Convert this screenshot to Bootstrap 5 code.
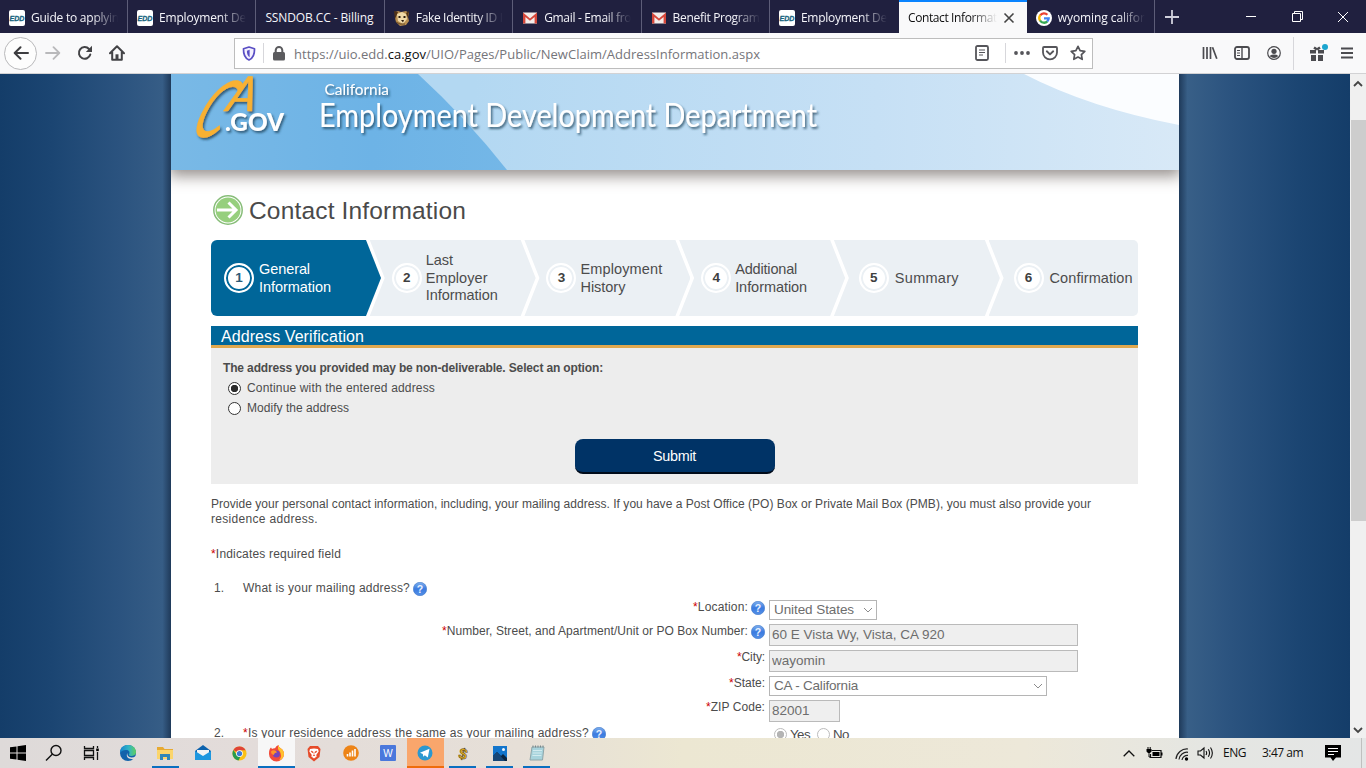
<!DOCTYPE html>
<html lang="en">
<head>
  <meta charset="UTF-8">
  <meta name="viewport" content="width=device-width, initial-scale=1">
  <title>Contact Information</title>
  <link href="https://cdn.jsdelivr.net/npm/bootstrap@5.3.0/dist/css/bootstrap.min.css" rel="stylesheet">
  <style>
    body { width: 1366px; height: 768px; font: 12px/15px "Liberation Sans", Arial, sans-serif; color: #4c4c4c; }
    svg { display: block; flex: none; }
    [data-w] { white-space: nowrap; }

    /* browser tabs */
    .tabstrip { height: 33px; background: #20203f; font: 12px/16px "Open Sans", "Noto Sans", sans-serif; color: #f5f5fa; }
    .btab { width: 128.4px; padding: 2px 9px 0 9px; border-right: 1px solid #5d5d78; gap: 6px; }
    .btab.first { width: 128px; }
    .btab.current { background: #f9f9fa; color: #0c0c0d; border-top: 2px solid #0a84ff; padding-top: 0; border-right: 0; width: 127.8px; }
    .btab.before { border-right-color: transparent; width: 129px; }
    .tabtext { overflow: hidden; -webkit-mask-image: linear-gradient(90deg, #000 70%, transparent 100%); mask-image: linear-gradient(90deg, #000 70%, transparent 100%); }
    .tabtext.whole { -webkit-mask-image: none; mask-image: none; overflow: visible; }
    .newtab { width: 34px; }
    .winbtn { width: 46px; }

    /* toolbar */
    .toolbar { height: 41px; background: #f9f9fa; border-bottom: 1px solid #d2d2d4; font: 13px/18px "Open Sans", "Noto Sans", sans-serif; color: #75757a; }
    .tool { width: 32px; height: 40px; }
    .backbtn { width: 33px; height: 33px; border: 1px solid #b9b9bb; border-radius: 50%; background: #fdfdfd; margin-left: 4px; }
    .urlbar { width: 859px; height: 31px; border: 1px solid #bdbdbd; background: #fff; margin-left: 101px; }
    .urltext { padding-top: 2px; }
    .vline { width: 1px; background: #d7d7db; }
    .vline.inbar { height: 20px; }
    .host { color: #0c0c0d; }

    /* page */
    .viewport { height: 664px; overflow: hidden; }
    .side { width: 171px; background: linear-gradient(90deg, #143d69, #1b4572 30%, #2b537f 70%, #365d86 95%, #1f3a5a); }
    .side.right { background: linear-gradient(270deg, #143d69, #1b4572 30%, #2b537f 70%, #385f87 95%, #1f3a5a); }
    .sheet { width: 1008px; background: #fff; }
    .banner { height: 96px; box-shadow: 0 4px 14px 2px rgba(80, 70, 65, .6); clip-path: inset(0 0 -24px 0); }
    .inner { padding: 24px 41px 0 40px; }
    .pagetitle { font-size: 24.5px; line-height: 31px; height: 32px; color: #4a4a4a; margin: 0 0 14px 2px; gap: 6px; }
    .pagetitle span { padding-top: 1px; }
    .scroller { width: 16px; background: #f0f0f0; padding-left: 1px; }
    .uparrow { margin-top: 3px; }
    .thumb { height: 401px; background: #cdcdcd; margin-top: 29px; }

    /* progress steps */
    .steps { height: 76px; margin-bottom: 10px; }
    .wstep { width: 166px; margin-left: -11.2px; padding-left: 22px; background: #ebf0f4; font-size: 14.5px; line-height: 17.4px; gap: 4px;
      clip-path: polygon(0 0, 151px 0, 166px 50%, 151px 100%, 0 100%, 15px 50%); }
    .wstep > :last-child { padding-top: 1px; }
    .wstep.on { width: 170px; margin-left: 0; padding-left: 13px; gap: 5px; background: #069; color: #fff; border-radius: 6px 0 0 6px;
      clip-path: polygon(0 0, 155px 0, 170px 50%, 155px 100%, 0 100%); }
    .wstep.last { width: 149.5px; border-radius: 0 5px 5px 0; clip-path: polygon(0 0, 100% 0, 100% 100%, 0 100%, 15px 50%); }
    .wstep.single { padding-left: 25px; gap: 6px; }
    .num { width: 30px; height: 30px; border-radius: 50%; border: 2px solid #fff; background: #fff; box-shadow: inset 0 0 0 2px #ebf0f4; font-weight: bold; font-size: 13.5px; color: #3f3f3f; flex: none; }
    .on .num { box-shadow: inset 0 0 0 2px #069; color: #2c5a76; }

    .barhead { height: 22px; background: #069; border-bottom: 3px solid #e0a84e; color: #fff; font-size: 16px; line-height: 21px; padding-left: 10px; }
    .verify { height: 136px; background: #ededed; padding: 13px 12px 0; }
    .optrow { height: 20.5px; padding-left: 5px; gap: 6px; }
    .optrow.top-opt { margin-top: 2px; }
    .optdot { appearance: none; width: 13px; height: 13px; margin: 0; border: 1px solid #333; border-radius: 50%; background: #fff; }
    .optdot:checked { background: radial-gradient(circle, #2b2b2b 0 3.4px, #fff 4px); }
    .optdot:disabled { border-color: #bcbcbc; }
    .optdot:disabled:checked { background: radial-gradient(circle, #b4b4b4 0 3.4px, #fff 4px); }
    .btn-send { width: 200px; height: 35px; margin: 20px auto 0; background: #036; color: #fff; border-radius: 8px; border: 0; border-bottom: 2px solid #000b1a; font-size: 14.4px; line-height: 32px; padding: 0; display: block; }
    .btn-send:hover { background: #036; color: #fff; }

    /* claim form */
    .intro { margin-top: 13px; }
    .legend-req { margin-top: 20px; }
    .req { color: #c00; }
    .question { margin-top: 19px; }
    .question svg, .question2 svg { margin-left: 3px; }
    .question2 { width: 563px; padding-top: 2px; }
    .qnum { width: 32px; padding-left: 3px; }
    .formrow { gap: 4px; height: 26px; }
    .formrow.tight { height: 24px; }
    .formrow.first-row { margin-top: 4px; }
    .lab { width: 554px; gap: 3px; height: 15px; }
    .field { appearance: none; border: 1px solid #bababa; background: #efefef; color: #6d6d6d; font-size: 13.5px; line-height: 18px; height: 22px; padding: 0 2px 2px; border-radius: 0; }
    .field.wide { width: 309px; }
    .field.zip { width: 71px; }
    .pick { height: 20px; background: #fff; border: 1px solid #b5b5b5; color: #6d6d6d; font-size: 13.5px; line-height: 18px; padding: 0 3px 0 4px; }
    .pick.country { width: 108px; }
    .pick.state { width: 278px; }
    .yesno { gap: 3px; margin-top: 3px; font-size: 13.3px; }

    /* taskbar */
    .taskbar { height: 30px; background: linear-gradient(90deg, #dedad9, #e3dcda 18%, #e6dfd7 38%, #ece7d2 50%, #ede8d9 75%, #e5e6e2 88%, #e4e6e6); font: 12px/16px "Open Sans", "Noto Sans", sans-serif; color: #111; }
    .app { width: 37.15px; height: 30px; border-bottom: 2px solid transparent; padding-top: 2px; }
    .app.start { width: 35.4px; }
    .app.open { background: linear-gradient(#0a6fc0, #0a6fc0) center bottom / 27px 2px no-repeat border-box; }
    .app.front { background: #f7f7f7; border-bottom-color: #0a6fc0; }
    .app.alert-app { background: #f9a66c; border-bottom-color: #ef6c0c; }
  </style>
</head>
<body class="d-flex flex-column overflow-hidden m-0">

  <!-- shared icons -->
  <svg width="0" height="0" class="position-absolute">
    <defs>
      <linearGradient id="helpFill" x1="0" y1="0" x2="0" y2="1"><stop offset="0" stop-color="#7fb0ee"/><stop offset=".5" stop-color="#3b7be0"/><stop offset="1" stop-color="#5590e6"/></linearGradient>
      <symbol id="edd" viewBox="0 0 16 16"><rect width="16" height="16" rx="2" fill="#fff"/><text x=".4" y="10.600" font-family="Liberation Sans" font-size="8" font-weight="bold" font-style="italic" fill="#17647e" stroke="#17647e" stroke-width=".3" textLength="15" lengthAdjust="spacingAndGlyphs">EDD</text></symbol>
      <symbol id="gmail" viewBox="0 0 16 16"><path d="M1 2.500h14v11H1z" fill="#f3ece9"/><path d="M1 13.500v-11l7 6 7-6v11h-2.400V7L8 10.700 3.400 7v6.500z" fill="#d5473a"/></symbol>
      <symbol id="help" viewBox="0 0 14 14"><circle cx="7" cy="7" r="6.700" fill="url(#helpFill)" stroke="#4077c8" stroke-width=".6"/><text x="7" y="10.800" text-anchor="middle" font-family="Liberation Sans" font-size="10.500" font-weight="bold" fill="#e8f1ff">?</text></symbol>
      <symbol id="down" viewBox="0 0 10 6"><path d="M1 1l4 4 4-4" fill="none" stroke="#8c8c8c"/></symbol>
    </defs>
  </svg>

  <div class="tabstrip d-flex">
    <div class="btab first d-flex align-items-center"><svg width="16" height="16"><use href="#edd"/></svg><div class="tabtext"><span data-w="88">Guide to applyin</span></div></div>
    <div class="btab d-flex align-items-center"><svg width="16" height="16"><use href="#edd"/></svg><div class="tabtext"><span data-w="87">Employment De</span></div></div>
    <div class="btab d-flex align-items-center"><div class="tabtext whole"><span data-w="108">SSNDOB.CC - Billing</span></div></div>
    <div class="btab d-flex align-items-center">
      <svg width="16" height="16" viewBox="0 0 16 16"><path d="M1 2l3-1 3 1 5-1 3 2-1 4 1 4-3 4-6 1-4-4-1-4z" fill="#b98f50"/><path d="M3 4l5-2 4 2 1 5-4 5-5-3z" fill="#efd9a8"/><path d="M0 1l4 1-3 7zM15 1l-3 2 2 5z" fill="#4f3218"/><path d="M4.500 6h2v2h-2zm5 0h2v2h-2zM7 10h3l-1 2.500z" fill="#2c1c0c"/><path d="M2 12l4 2 5 0" stroke="#6b4a23" fill="none"/></svg>
      <div class="tabtext"><span data-w="87">Fake Identity ID I</span></div></div>
    <div class="btab d-flex align-items-center"><svg width="16" height="16"><use href="#gmail"/></svg><div class="tabtext"><span data-w="87">Gmail - Email fro</span></div></div>
    <div class="btab d-flex align-items-center"><svg width="16" height="16"><use href="#gmail"/></svg><div class="tabtext"><span data-w="87">Benefit Program</span></div></div>
    <div class="btab before d-flex align-items-center"><svg width="16" height="16"><use href="#edd"/></svg><div class="tabtext"><span data-w="86">Employment De</span></div></div>
    <div class="btab current d-flex align-items-center">
      <div class="tabtext"><span data-w="89">Contact Informat</span></div>
      <svg width="12" height="12" viewBox="0 0 12 12"><path d="M1.500 1.500l9 9m0-9l-9 9" stroke="#444" stroke-width="1.600"/></svg></div>
    <div class="btab d-flex align-items-center">
      <svg width="16" height="16" viewBox="0 0 16 16"><circle cx="8" cy="8" r="8" fill="#fff"/><g fill="none" stroke-width="2.300"><path d="M4.200 5.400A4.700 4.700 0 0 1 11.400 4.800" stroke="#ea4335"/><path d="M4.200 5.200a4.800 4.800 0 0 0 0 5.600" stroke="#fbbc05"/><path d="M4.100 10.500a4.700 4.700 0 0 0 7.300.9" stroke="#34a853"/><path d="M8 8.300h4.700a4.700 4.700 0 0 1-1.400 3.200" stroke="#4285f4"/></g></svg>
      <div class="tabtext"><span data-w="87">wyoming califor</span></div></div>
    <div class="newtab d-flex align-items-center justify-content-center"><svg width="14" height="14" viewBox="0 0 14 14"><path d="M7 0v14M0 7h14" stroke="#d0d0dc" stroke-width="1.800"/></svg></div>
    <div class="d-flex align-items-center ms-auto">
      <div class="winbtn d-flex justify-content-center"><svg width="10" height="10"><path d="M0 4.500h10" stroke="#fff"/></svg></div>
      <div class="winbtn d-flex justify-content-center"><svg width="11" height="11"><path d="M.5 2.500h8v8h-8zM2.500 2.500v-2h8v8h-2" fill="none" stroke="#fff"/></svg></div>
      <div class="winbtn d-flex justify-content-center"><svg width="10" height="10"><path d="M0 0l10 10M10 0L0 10" stroke="#fff"/></svg></div>
    </div>
  </div>

  <div class="toolbar d-flex align-items-center">
    <div class="backbtn d-flex align-items-center justify-content-center"><svg width="16" height="14" viewBox="0 0 16 14"><path d="M15 7H2M7.500 1.200L1.700 7l5.800 5.800" fill="none" stroke="#3d3d40" stroke-width="2" stroke-linecap="round" stroke-linejoin="round"/></svg></div>
    <div class="tool d-flex align-items-center justify-content-center"><svg width="16" height="14" viewBox="0 0 16 14"><path d="M1 7h13M8.500 1.200L14.300 7l-5.800 5.800" fill="none" stroke="#b9b9bb" stroke-width="1.800" stroke-linecap="round" stroke-linejoin="round"/></svg></div>
    <div class="tool d-flex align-items-center justify-content-center"><svg width="16" height="16" viewBox="0 0 16 16"><path d="M13.300 9.500A5.800 5.800 0 1 1 12 4" fill="none" stroke="#434346" stroke-width="2" stroke-linecap="round"/><path d="M15 .8V7H8.800z" fill="#434346"/></svg></div>
    <div class="tool d-flex align-items-center justify-content-center"><svg width="16" height="16" viewBox="0 0 16 16"><path d="M1 8.200L8 1.300l7 6.900M3.200 7v7.700h9.600V7" fill="none" stroke="#434346" stroke-width="2" stroke-linecap="round" stroke-linejoin="round"/><path d="M6.500 14.500V9.300h3v5.200" fill="#434346"/></svg></div>

    <div class="urlbar d-flex align-items-center">
      <div class="d-flex justify-content-center" style="width:28px"><svg width="14" height="15" viewBox="0 0 14 15"><path d="M7 1l5.500 1.700C12.700 8 11.500 12 7 14 2.500 12 1.300 8 1.500 2.700z" fill="#f4f0ff" stroke="#5a4fc4" stroke-width="1.700" stroke-linejoin="round"/><path d="M7.600 3.800v7.400C5.400 9.800 4.900 7.500 4.900 4.700z" fill="#5a4fc4"/></svg></div>
      <div class="vline inbar"></div>
      <div class="d-flex justify-content-center" style="width:30px"><svg width="12" height="15" viewBox="0 0 12 15"><rect y="6" width="12" height="8.500" rx="1.500" fill="#5b5b5e"/><path d="M2.700 7V4.300a3.300 3.300 0 0 1 6.600 0V7" fill="none" stroke="#5b5b5e" stroke-width="2"/></svg></div>
      <span class="urltext" data-w="466">https://uio.edd.<span class="host">ca.gov</span>/UIO/Pages/Public/NewClaim/AddressInformation.aspx</span>
      <div class="ms-auto d-flex align-items-center">
        <svg width="14" height="16" viewBox="0 0 14 16" class="me-3"><rect x="1" y="1" width="12" height="14" rx="1.500" fill="none" stroke="#55555a" stroke-width="1.800"/><path d="M4 5h6M4 7.500h6M4 10h4" stroke="#55555a"/></svg>
        <div class="vline inbar"></div>
        <svg width="16" height="16" viewBox="0 0 16 16" style="margin:0 12px 0 8px"><g fill="#55555a"><circle cx="2" cy="8" r="1.900"/><circle cx="8" cy="8" r="1.900"/><circle cx="14" cy="8" r="1.900"/></g></svg>
        <svg width="16" height="16" viewBox="0 0 16 16" style="margin-right:12px"><path d="M2 2h12q1 0 1 1v4.500a7 6.800 0 0 1-14 0V3q0-1 1-1z" fill="none" stroke="#55555a" stroke-width="1.800"/><path d="M4.800 6.300L8 9.400l3.200-3.100" fill="none" stroke="#55555a" stroke-width="1.900" stroke-linecap="round" stroke-linejoin="round"/></svg>
        <svg width="16" height="16" viewBox="0 0 16 16" style="margin-right:6px"><path d="M8 1.300l2.100 4.300 4.700.7-3.400 3.300.8 4.700L8 12.100l-4.200 2.200.8-4.700L1.200 6.300l4.700-.7z" fill="none" stroke="#55555a" stroke-width="1.700" stroke-linejoin="round"/></svg>
      </div>
    </div>

    <div class="ms-auto d-flex align-items-center" style="width:172px">
      <div class="tool d-flex align-items-center justify-content-center"><svg width="16" height="14" viewBox="0 0 16 14"><path d="M1.500 1v12M5 1v12M8.500 1v12M10.500 1.300l4.300 11.500" stroke="#4b4b4f" stroke-width="1.700"/></svg></div>
      <div class="tool d-flex align-items-center justify-content-center"><svg width="16" height="14" viewBox="0 0 16 14"><rect x="1" y="1" width="14" height="12" rx="2" fill="none" stroke="#4b4b4f" stroke-width="1.800"/><path d="M8 1v12" stroke="#4b4b4f" stroke-width="1.400"/><path d="M3 4.500h3M3 7h3M3 9.500h3" stroke="#4b4b4f"/></svg></div>
      <div class="tool d-flex align-items-center justify-content-center"><svg width="14" height="14" viewBox="0 0 14 14"><circle cx="7" cy="7" r="6.300" fill="none" stroke="#4b4b4f" stroke-width="1.200"/><circle cx="7" cy="5.300" r="2.600" fill="#4b4b4f"/><path d="M2.700 10a5 3 0 0 1 8.600 0Q9.500 12 7 12T2.700 10z" fill="#4b4b4f"/></svg></div>
      <div class="vline" style="height:33px;margin:0 15px 0 3px"></div>
      <svg width="20" height="20" viewBox="0 0 20 20"><path d="M1 7h6v3.500H1zm8 0h6v3.500H9zM2 12h5v6H2zm7 0h5v6H9z" fill="#4b4b4f"/><path d="M8 6.500L5 4.500M8 6.500l3-2" stroke="#4b4b4f" stroke-width="2.600"/><circle cx="16" cy="4" r="3" fill="#1ba5cf"/></svg>
      <div class="tool d-flex align-items-center justify-content-center" style="margin-left:2px"><svg width="12" height="12"><path d="M0 1.500h12M0 6h12M0 10.500h12" stroke="#4b4b4f" stroke-width="1.800"/></svg></div>
    </div>
  </div>

  <div class="viewport d-flex">
    <div class="side"></div>
    <div class="sheet">
      <div class="banner">
        <svg width="1008" height="96" viewBox="171 74 1008 96">
          <defs>
            <linearGradient id="sky" x1="0" y1="0" x2="1" y2="0"><stop offset=".3" stop-color="#b3d8f2"/><stop offset=".7" stop-color="#c6e0f5"/><stop offset="1" stop-color="#d8e9f7"/></linearGradient>
            <linearGradient id="skyLeft" x1="0" y1="0" x2="1" y2="0"><stop offset="0" stop-color="#79b9e6"/><stop offset=".6" stop-color="#6db3e6"/><stop offset="1" stop-color="#74b7e7"/></linearGradient>
            <filter id="drop" x="-20%" y="-20%" width="140%" height="150%"><feDropShadow dx="1.500" dy="2" stdDeviation="1.200" flood-color="#1d3c55" flood-opacity=".75"/></filter>
          </defs>
          <rect x="171" y="74" width="1008" height="96" fill="url(#sky)"/>
          <path d="M171 74h247Q466 118 507 170H171z" fill="url(#skyLeft)"/>
          <path d="M1024 74Q1090 108 1179 125V74z" fill="#fbfdff"/>
          <g filter="url(#drop)" font-family="Lato, sans-serif">
            <g fill="#f8b133" stroke="#f8b133" font-style="italic">
              <text transform="translate(187.500 137) skewX(-26) scale(.64 1)" font-size="78" stroke-width=".3">C</text>
              <text transform="translate(225 111) skewX(-14) scale(.95 1)" font-size="48" stroke-width=".6">A</text>
            </g>
            <text x="225" y="131" font-size="24" font-weight="900" fill="#fff" textLength="59" lengthAdjust="spacingAndGlyphs">.GOV</text>
            <text x="324.500" y="95" font-size="14.500" fill="#fff" textLength="64.500" lengthAdjust="spacingAndGlyphs">California</text>
            <text x="319" y="126.500" font-size="32" fill="#fff" textLength="498" lengthAdjust="spacingAndGlyphs">Employment Development Department</text>
          </g>
        </svg>
      </div>

      <div class="inner">
        <h1 class="pagetitle d-flex align-items-center fw-normal">
          <svg width="30" height="30" viewBox="0 0 30 30"><circle cx="15" cy="15" r="14.200" fill="#fff" stroke="#87bd78" stroke-width="1.500"/><circle cx="15" cy="15" r="12.500" fill="#96cf7d"/><path d="M4 15h19M15.500 7.500L23 15l-7.500 7.500" fill="none" stroke="#fff" stroke-width="3"/></svg>
          <span data-w="217">Contact Information</span>
        </h1>

        <div class="steps d-flex">
          <div class="wstep on d-flex align-items-center"><div class="num d-flex align-items-center justify-content-center">1</div><div><span data-w="51">General</span><br><span data-w="72">Information</span></div></div>
          <div class="wstep d-flex align-items-center"><div class="num d-flex align-items-center justify-content-center">2</div><div>Last<br><span data-w="62">Employer</span><br><span data-w="72">Information</span></div></div>
          <div class="wstep d-flex align-items-center"><div class="num d-flex align-items-center justify-content-center">3</div><div><span data-w="82">Employment</span><br><span data-w="45">History</span></div></div>
          <div class="wstep d-flex align-items-center"><div class="num d-flex align-items-center justify-content-center">4</div><div><span data-w="62">Additional</span><br><span data-w="72">Information</span></div></div>
          <div class="wstep single d-flex align-items-center"><div class="num d-flex align-items-center justify-content-center">5</div><span data-w="64">Summary</span></div>
          <div class="wstep last single d-flex align-items-center"><div class="num d-flex align-items-center justify-content-center">6</div><span data-w="83">Confirmation</span></div>
        </div>

        <div class="barhead"><span data-w="143">Address Verification</span></div>
        <div class="verify">
          <div class="fw-bold"><span data-w="380">The address you provided may be non-deliverable. Select an option:</span></div>
          <label class="optrow top-opt d-flex align-items-center"><input class="optdot" type="radio" name="verify" checked><span data-w="188">Continue with the entered address</span></label>
          <label class="optrow d-flex align-items-center"><input class="optdot" type="radio" name="verify"><span data-w="102">Modify the address</span></label>
          <button class="btn btn-send" type="button"><span data-w="43">Submit</span></button>
        </div>

        <div class="intro"><span data-w="880">Provide your personal contact information, including, your mailing address. If you have a Post Office (PO) Box or Private Mail Box (PMB), you must also provide your</span><br><span data-w="107">residence address.</span></div>
        <div class="legend-req"><span data-w="130"><span class="req">*</span>Indicates required field</span></div>

        <div class="question d-flex align-items-center"><div class="qnum">1.</div><span data-w="167">What is your mailing address?</span><svg width="14" height="14"><use href="#help"/></svg></div>

        <div class="formrow tight first-row d-flex">
          <div class="lab d-flex align-items-center justify-content-end"><span data-w="55"><span class="req">*</span>Location:</span><svg width="14" height="14"><use href="#help"/></svg></div>
          <div class="pick country d-flex align-items-center justify-content-between"><span data-w="80">United States</span><svg width="10" height="6"><use href="#down"/></svg></div>
        </div>
        <div class="formrow d-flex">
          <div class="lab d-flex align-items-center justify-content-end"><span data-w="306"><span class="req">*</span>Number, Street, and Apartment/Unit or PO Box Number:</span><svg width="14" height="14"><use href="#help"/></svg></div>
          <input class="field wide" value="60 E Vista Wy, Vista, CA 920" disabled>
        </div>
        <div class="formrow d-flex">
          <div class="lab d-flex align-items-center justify-content-end"><span data-w="28"><span class="req">*</span>City:</span></div>
          <input class="field wide" value="wayomin" disabled>
        </div>
        <div class="formrow tight d-flex">
          <div class="lab d-flex align-items-center justify-content-end"><span data-w="36"><span class="req">*</span>State:</span></div>
          <div class="pick state d-flex align-items-center justify-content-between"><span data-w="84">CA - California</span><svg width="10" height="6"><use href="#down"/></svg></div>
        </div>
        <div class="formrow tight d-flex">
          <div class="lab d-flex align-items-center justify-content-end"><span data-w="59"><span class="req">*</span>ZIP Code:</span></div>
          <input class="field zip" value="82001" disabled>
        </div>
        <div class="d-flex align-items-start">
          <div class="question2 d-flex align-items-center"><div class="qnum">2.</div><span data-w="346"><span class="req">*</span>Is your residence address the same as your mailing address?</span><svg width="14" height="14"><use href="#help"/></svg></div>
          <div class="yesno d-flex align-items-center">
            <input class="optdot" type="radio" checked disabled><span data-w="20">Yes</span>
            <input class="optdot ms-1" type="radio" disabled><span data-w="16">No</span>
          </div>
        </div>
      </div>
    </div>
    <div class="side right"></div>
    <div class="scroller d-flex flex-column">
      <svg width="14" height="14" class="uparrow"><path d="M3 9l4-4 4 4" fill="none" stroke="#444" stroke-width="1.800"/></svg>
      <div class="thumb"></div>
      <svg width="14" height="14" class="mt-auto"><path d="M3 4l4 4 4-4" fill="none" stroke="#444" stroke-width="1.800"/></svg>
    </div>
  </div>

  <div class="taskbar d-flex align-items-center">
    <div class="app start d-flex align-items-center justify-content-center"><svg width="16" height="16"><path d="M0 2.300l6.500-.9v6.100H0zM7.500 1.200L16 0v7.500H7.500zM0 8.500h6.500v6.100L0 13.700zM7.500 8.500H16V16l-8.500-1.200z"/></svg></div>
    <div class="app d-flex align-items-center justify-content-center"><svg width="18" height="18"><g fill="none" stroke="#111" stroke-width="1.400"><circle cx="11" cy="6.500" r="5"/><path d="M7.500 10L1 16.500"/></g></svg></div>
    <div class="app d-flex align-items-center justify-content-center"><svg width="17" height="16"><g fill="none" stroke="#111" stroke-width="1.300"><path d="M1.500 1v2.500h9V1M1.500 5.500h9v5h-9zM1.500 15v-2.500h9V15M14.500 1v2M14.500 7v8"/></g><path d="M13.200 3.500h2.600v2.600h-2.600z"/></svg></div>
    <div class="app d-flex align-items-center justify-content-center"><svg width="18" height="18" viewBox="0 0 18 18"><defs><linearGradient id="edgeTop"><stop offset="0" stop-color="#1683cf"/><stop offset=".55" stop-color="#31b6c4"/><stop offset="1" stop-color="#62cf5b"/></linearGradient></defs><circle cx="9" cy="9" r="8" fill="#1262ab"/><path d="M1 9C1 3 5 1 9 1c5 0 8 3.500 8 7 0 3-2.500 4-5 4-2 0-2.500-1-1.700-2.200C11 8 10 6 7 6 4 6 1.500 7.500 1 9z" fill="url(#edgeTop)"/><path d="M8.500 9c-.7 2 .8 4.300 4 4.500q2.300 0 4-1.300L17.500 14l-2 2q-1-.8-3-1C9 15 6.500 12 8.500 9z" fill="#e3dcda"/></svg></div>
    <div class="app open d-flex align-items-center justify-content-center"><svg width="16" height="15"><path d="M0 1h6l1.500 2H16v10H0z" fill="#e7aa32"/><path d="M0 4h16v9H0z" fill="#fbd56c"/><path d="M3 14V8h10v6h-3v-3H6v3z" fill="#2f86b9"/></svg></div>
    <div class="app d-flex align-items-center justify-content-center"><svg width="16" height="16"><path d="M0 6l8-6 8 6v9H0z" fill="#0d62ad"/><path d="M2 5h12v6H2z" fill="#f4f4f4"/><path d="M0 6l8 5 8-5v9H0z" fill="#1e97df"/></svg></div>
    <div class="app d-flex align-items-center justify-content-center"><svg width="15" height="15" viewBox="0 0 16 16"><circle cx="8" cy="8" r="7.500" fill="#fbc116"/><path d="M8 8L1.500 4.200A7.500 7.500 0 0 1 14.600 4.500H8z" fill="#df4437"/><path d="M1.500 4.200A7.500 7.500 0 0 0 7 15.400L9.500 10 5 9.700z" fill="#289b50"/><circle cx="8" cy="8" r="3.600" fill="#fff"/><circle cx="8" cy="8" r="2.800" fill="#3e7bd5"/></svg></div>
    <div class="app front d-flex align-items-center justify-content-center"><svg width="17" height="17" viewBox="0 0 17 17"><path d="M1 8C1 5 2 3.500 3 2.500L4 4q1.500-1 3-.7Q8 1 10.500 0q0 2 2.500 3.500Q16 5.500 16 9A7.500 7.500 0 0 1 1 9z" fill="#f24b3a"/><path d="M10.500 0q0 2 2.500 3.500Q16 5.500 16 9q-.4 5-5 6.500Q15 11 11.500 6 9 4 10.500 0z" fill="#ffc22e"/><circle cx="8.400" cy="9" r="3.500" fill="#7544ba"/><path d="M3 6.500q2-2 5-.5l1 1.500Q6 7.500 6 10 3 9.500 3 6.500z" fill="#ff9428"/></svg></div>
    <div class="app d-flex align-items-center justify-content-center"><svg width="14" height="17" viewBox="0 0 14 17"><path d="M3 1h8l2.500 3-1 8L7 16.500 1.500 12 .5 4z" fill="#e64b2a"/><path d="M3 4l4-.5L11 4l.7 2.500-2.500 3.500.5 1.500L7 13.500 4.300 11.500l.5-1.500-2.500-3.500z" fill="#fff"/><path d="M4 6l2 .8L5.500 8zM10 6l-2 .8.5 1.200zM7 7v4M5.800 11L7 10.200 8.200 11" fill="#e64b2a" stroke="#e64b2a" stroke-width=".6"/></svg></div>
    <div class="app d-flex align-items-center justify-content-center"><svg width="16" height="16"><circle cx="8" cy="8" r="7.800" fill="#ed8417"/><path d="M4.500 11.500V9M7 11.500V7.500M9.500 11.500V5.500M12 11.500V4" stroke="#fff" stroke-width="1.600"/></svg></div>
    <div class="app d-flex align-items-center justify-content-center"><svg width="16" height="16"><rect width="16" height="16" rx="1" fill="#4a78dc"/><text x="3.200" y="11.600" font-family="Liberation Sans" font-size="10" fill="#fff">W</text></svg></div>
    <div class="app alert-app d-flex align-items-center justify-content-center"><svg width="16" height="16"><circle cx="8" cy="8" r="7.500" fill="#2b98d0"/><path d="M3 7.800l9.500-4-1.700 8.700-3-2.300-1.500 1.600-.5-2.800z" fill="#fff"/></svg></div>
    <div class="app open d-flex align-items-center justify-content-center"><svg width="16" height="17"><text x="8" y="14" text-anchor="middle" transform="rotate(15 8 9)" font-family="Liberation Sans" font-weight="bold" font-size="15" fill="#e9b41c" stroke="#4b3815" stroke-width=".5">$</text></svg></div>
    <div class="app open d-flex align-items-center justify-content-center"><svg width="14" height="15"><path d="M0 0h14v15H0z" fill="#1275cc"/><path d="M0 15V10l4-4 4 4 2-2 4 4v3z" fill="#0a2540"/><path d="M0 10l4-4 8 9H0z" fill="#174777"/><circle cx="10.500" cy="3.500" r="1.500" fill="#eef6ff"/></svg></div>
    <div class="app open d-flex align-items-center justify-content-center"><svg width="16" height="16"><path d="M3 2h12l-1.500 13H1z" fill="#a7d3dc" stroke="#8fa6aa"/><path d="M4 5.500h9M3.700 8h9M3.400 10.500h9" stroke="#d2ebef"/><path d="M4 .5v2M6.500.5v2M9 .5v2M11.500.5v2M14 .5v2" stroke="#77878a"/></svg></div>

    <div class="ms-auto d-flex align-items-center h-100">
      <svg width="12" height="7"><path d="M.7 6.300L6 1l5.300 5.300" fill="none" stroke="#111" stroke-width="1.300"/></svg>
      <svg width="17" height="14" style="margin-left:11px"><path d="M5.500 4.500h9.500v7H4.500V8" fill="none" stroke="#111" stroke-width="1.200"/><path d="M6.500 6h7v4h-7zM15 6.500h1.500v3H15zM.5 3h5v2.500L4 7H2L.5 5.500zM1.500 1h1v2h-1zM3.700 1h1v2h-1z"/><path d="M3 7v4h2" fill="none" stroke="#111"/></svg>
      <svg width="15" height="15" style="margin-left:12px"><g fill="none" stroke="#222" stroke-width="1.200"><path d="M1 13A11 11 0 0 1 13 3M4 13.500A8 8 0 0 1 13 6.300M7 14a5.500 5.500 0 0 1 6-4.600"/></g><circle cx="11.500" cy="13" r="1.700"/></svg>
      <svg width="17" height="14" style="margin-left:7px"><g fill="none" stroke="#111" stroke-width="1.100"><path d="M1 5h2.500L7 2v10L3.500 9H1zM9 5q1.300 2 0 4M11.300 3.300q2.500 3.700 0 7.400M13.500 1.500q3.700 5.500 0 11"/></g></svg>
      <span data-w="23" style="margin-left:9px">ENG</span>
      <span data-w="41" style="margin-left:16px">3:47 am</span>
      <svg width="16" height="16" style="margin-left:22px"><path d="M0 0h16v12.500h-5L8 16l-2.500-3.500H0z"/><path d="M3 3.500h10M3 6.500h10M3 9.500h6" stroke="#fff" stroke-width="1.200"/></svg>
      <div class="vline h-100" style="margin:0 4px 0 20px;background:#bfc0bf"></div>
    </div>
  </div>

  <script src="https://cdn.jsdelivr.net/npm/bootstrap@5.3.0/dist/js/bootstrap.bundle.min.js"></script>
  <script>
    // track each label out to its data-w width
    document.querySelectorAll("[data-w]").forEach(el => {
      const width = el.getBoundingClientRect().width;
      el.style.letterSpacing = (el.dataset.w - width) / el.textContent.length + "px";
    });
  </script>
</body>
</html>
